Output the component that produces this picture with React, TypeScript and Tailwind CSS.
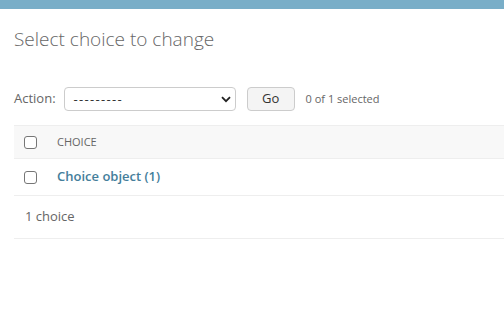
export default function App() {
  return (
    <div className="min-h-[334px] bg-white text-[#333] font-['Segoe_UI','Open_Sans',sans-serif]">
      <div className="h-[9px] bg-[#79aec8]" />
      <div className="px-[14px]">
        <h1 className="pt-[18px] text-[19px] font-light text-[#666] leading-[24px]">Select choice to change</h1>

        <div className="mt-[36px] flex items-center h-[24px] text-[13px] text-[#666]">
          <label className="mr-[8px]">Action:</label>
          <div className="relative w-[172px] h-[24px] border border-[#ccc] rounded-[4px] bg-white">
            <span className="absolute left-[9px] top-[2px] text-[13px] text-[#333] tracking-[1.3px]">---------</span>
            <svg className="absolute right-[4px] top-[8px]" width="10" height="7" viewBox="0 0 10 7">
              <path d="M1 1.2 L5 5.2 L9 1.2" fill="none" stroke="#222" strokeWidth="1.8" />
            </svg>
          </div>
          <button className="ml-[11px] w-[48px] h-[24px] border border-[#ccc] rounded-[4px] bg-[#f4f4f4] text-[13px] text-[#333]">Go</button>
          <span className="ml-[11px] text-[11px] text-[#666]">0 of 1 selected</span>
        </div>

        <div className="mt-[14px] mr-[-14px]">
          <div className="flex items-center h-[34px] bg-[#f8f8f8] border-t border-b border-[#eee]">
            <span className="ml-[10px] w-[13px] h-[13px] border border-[#767676] rounded-[3px] bg-white" />
            <span className="ml-[20px] text-[11px] text-[#666] uppercase">Choice</span>
          </div>
          <div className="flex items-center h-[37px] border-b border-[#eee]">
            <span className="ml-[10px] w-[13px] h-[13px] border border-[#767676] rounded-[3px] bg-white" />
            <a className="ml-[20px] text-[13px] font-semibold text-[#447e9b]">Choice object (1)</a>
          </div>
          <div className="flex items-center h-[43px] border-b border-[#eee] pl-[11px] text-[13px] text-[#666]">
            1 choice
          </div>
        </div>
      </div>
    </div>
  )
}
